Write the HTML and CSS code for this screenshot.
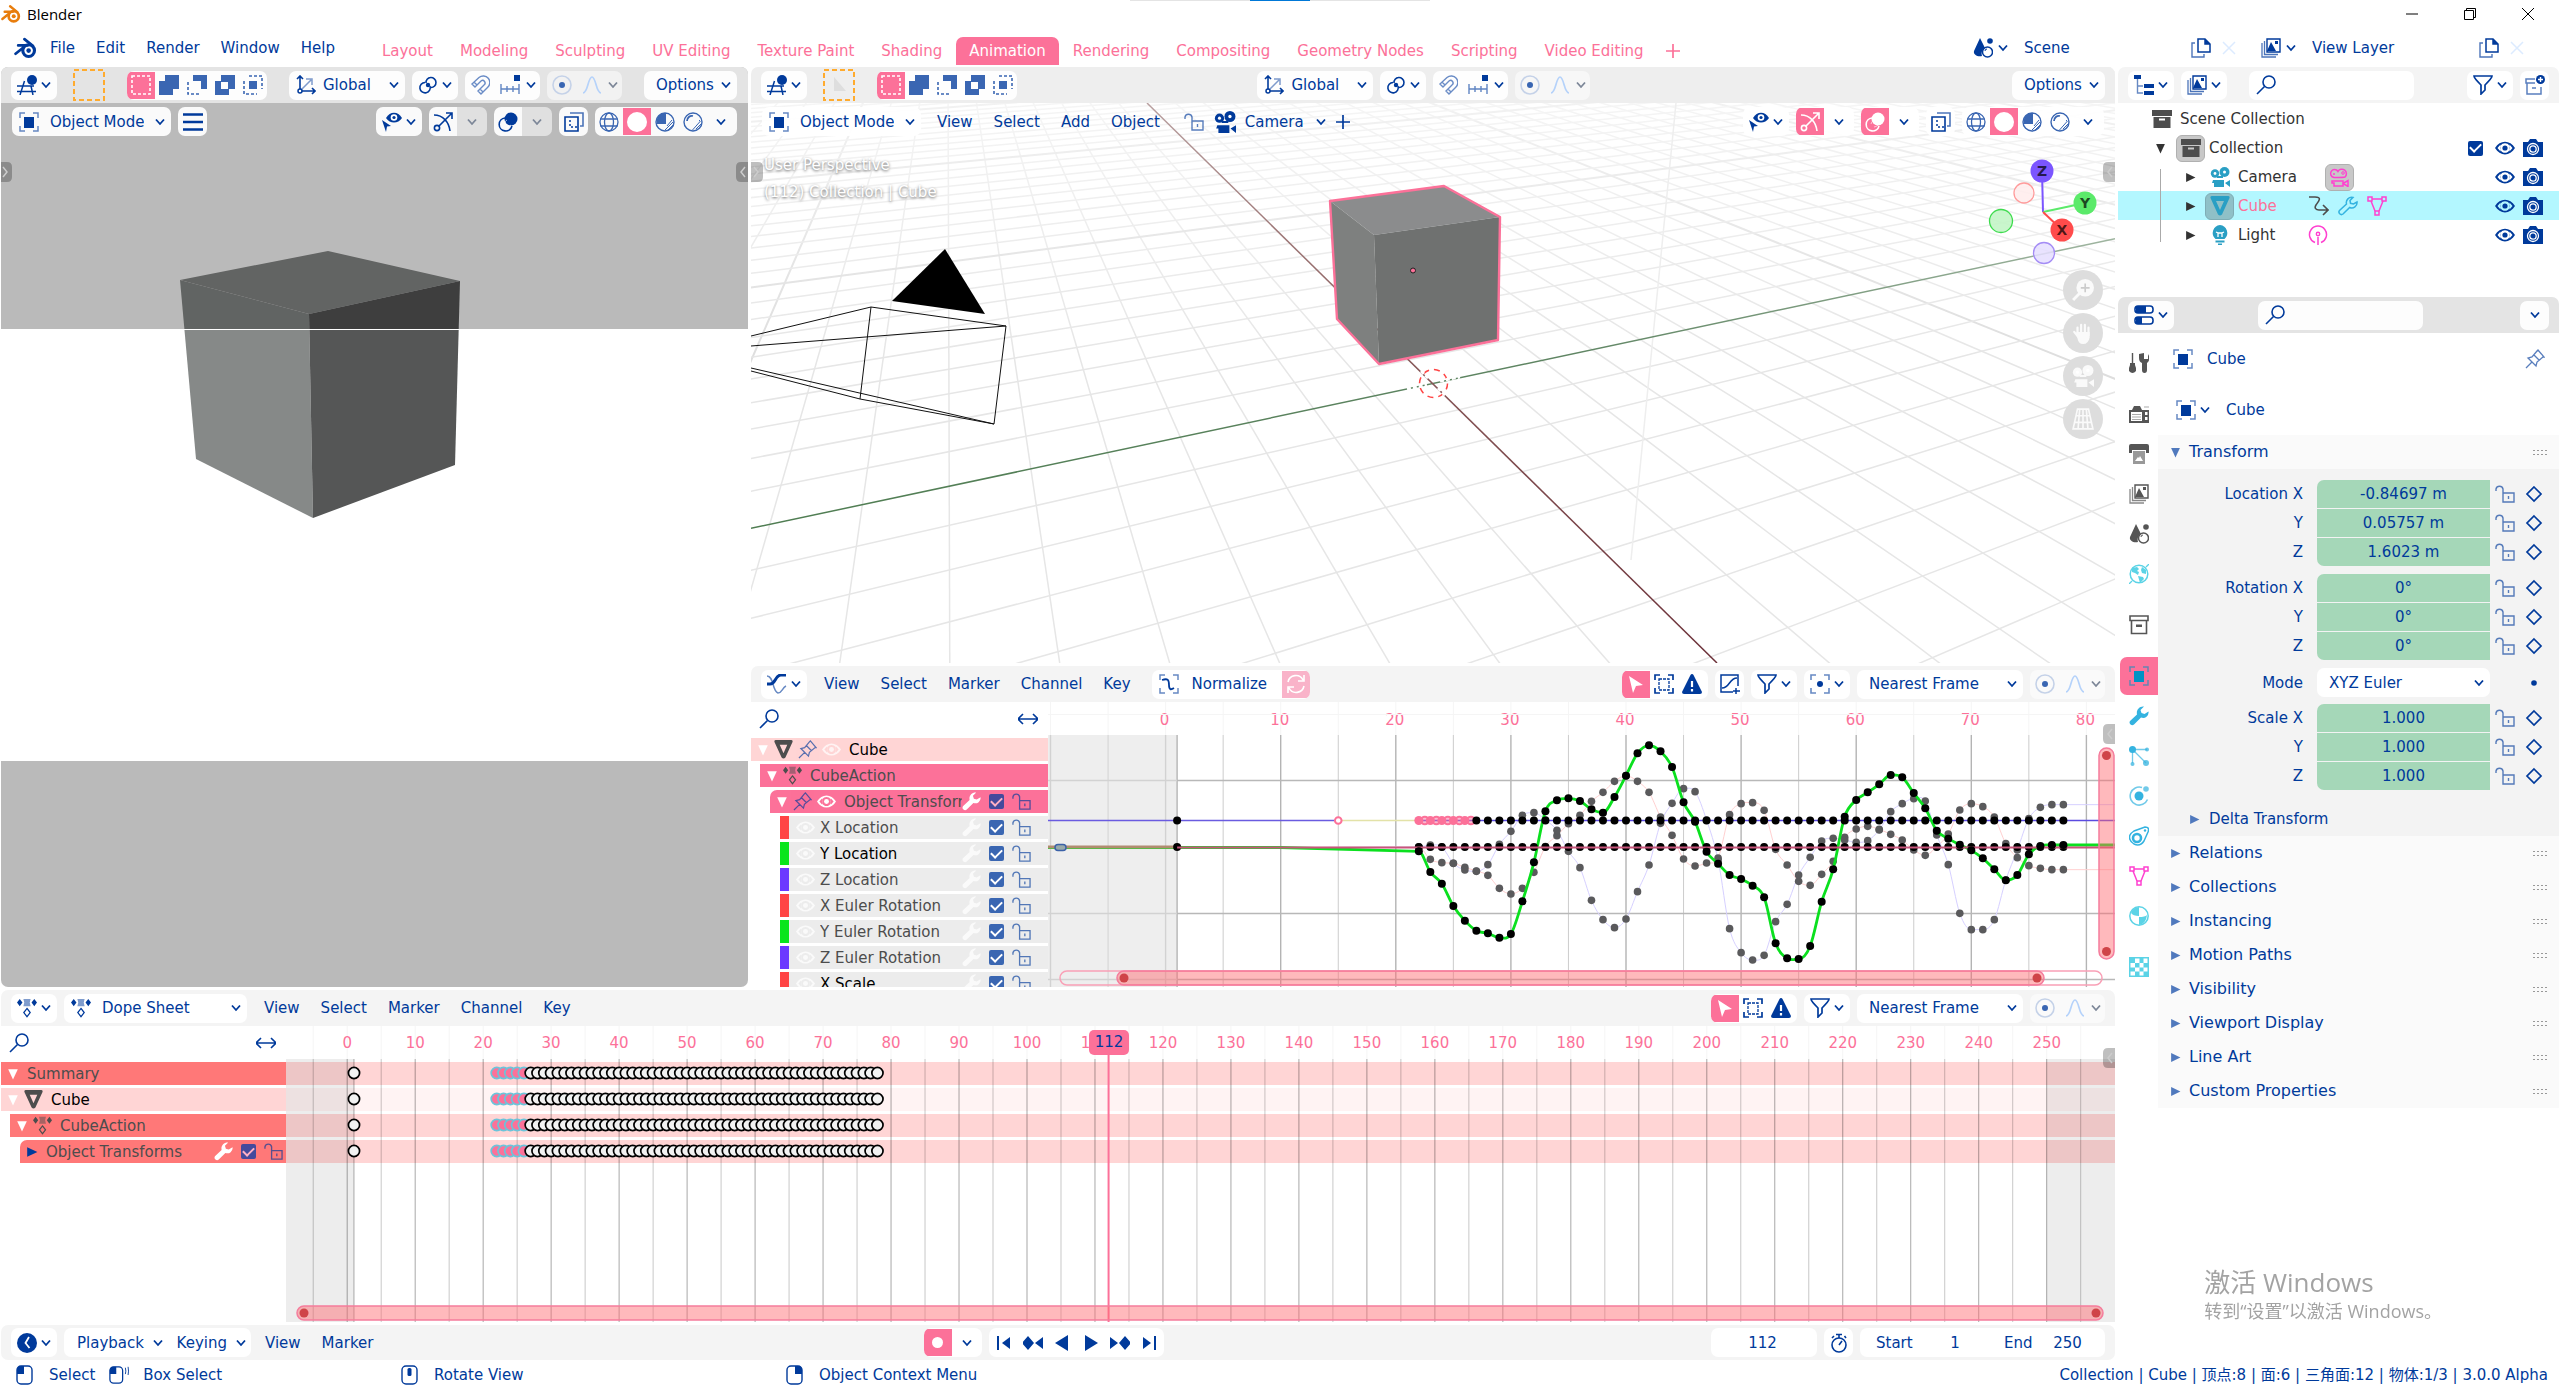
FILE: index.html
```html
<!DOCTYPE html>
<html lang="en">
<head>
<meta charset="utf-8">
<title>Blender</title>
<link rel="stylesheet" href="styles.css">
</head>
<body>
<svg class="defs" aria-hidden="true">
  <defs>
  <symbol id="logo" viewBox="0 0 22 20"><g fill="none" stroke="currentColor" stroke-linecap="round"><circle cx="14" cy="12.500" r="5.600" stroke-width="3"/><path d="M1.500 15.500L9 9.500M4 7.500h9M10 1.500l8 6.500" stroke-width="2.600"/></g><circle cx="14" cy="12.500" r="2.200" fill="currentColor"/></symbol>
  <symbol id="chev" viewBox="0 0 10 8"><path d="M1 1.500l4 4.500 4-4.500" fill="none" stroke="currentColor" stroke-width="1.800"/></symbol>
  <symbol id="view3d" viewBox="0 0 20 20"><path d="M0 11h17M0 16.500h19M7.500 6L3 20M14 11l2 9" fill="none" stroke="currentColor" stroke-width="1.500"/><circle cx="15" cy="5" r="5" fill="currentColor"/></symbol>
  <symbol id="selbox" viewBox="0 0 32 32"><rect x="1" y="1" width="30" height="30" fill="none" stroke="#ffab2e" stroke-width="2" stroke-dasharray="5 3"/></symbol>
  <symbol id="m-set" viewBox="0 0 20 20"><rect x="1" y="1" width="18" height="18" fill="none" stroke="#fff" stroke-width="1.600" stroke-dasharray="3 2"/></symbol>
  <symbol id="m-ext" viewBox="0 0 20 20"><path d="M6 0h14v14h-6v6H0V6h6z" fill="currentColor"/></symbol>
  <symbol id="m-sub" viewBox="0 0 20 20"><path d="M6 0h14v14h-6V6H6z" fill="currentColor"/><path d="M1 7v12h12" fill="none" stroke="currentColor" stroke-width="1.600" stroke-dasharray="3 2"/></symbol>
  <symbol id="m-inv" viewBox="0 0 20 20"><path fill-rule="evenodd" d="M6 0h14v14h-6v6H0V6h6zM6 7v7h7V7z" fill="currentColor"/></symbol>
  <symbol id="m-int" viewBox="0 0 20 20"><path d="M6 6h8v8H6z" fill="currentColor"/><path d="M6 1h13v13M1 6v13h13" fill="none" stroke="currentColor" stroke-width="1.600" stroke-dasharray="3 2"/></symbol>
  <symbol id="axes" viewBox="0 0 20 20"><path d="M4 16V1M1 4l3-3 3 3M4 16h15M16 13l3 3-3 3" fill="none" stroke="currentColor" stroke-width="1.600"/><path d="M5 15L15 5M10 4h6v6" fill="none" stroke="currentColor" stroke-opacity=".5" stroke-width="1.500"/><circle cx="4" cy="16" r="2" fill="#fff" stroke="currentColor" stroke-width="1.500"/></symbol>
  <symbol id="pivot" viewBox="0 0 20 20"><g fill="none" stroke="currentColor" stroke-width="1.600"><path d="M8 8a5 5 0 1 1 5 4.500"/><path d="M12 11a5.200 5.200 0 1 1-5-3.500"/></g><circle cx="10" cy="10" r="2.200" fill="currentColor"/></symbol>
  <symbol id="magnet" viewBox="0 0 20 20"><path d="M2 9l7-6.500a6.500 6.500 0 0 1 8.500 10L11 19l-3-3 6-6a2.500 2.500 0 0 0-3-4L5 12zM4 7l3 3M10 14l3 3" fill="none" stroke="currentColor" stroke-width="1.400"/></symbol>
  <symbol id="incr" viewBox="0 0 20 20"><path d="M1 14h18M1 9v10M7 11v6M13 11v6M19 9v10" fill="none" stroke="currentColor" stroke-width="1.400"/><path d="M14 0h6v6h-6z" fill="#003a9b"/></symbol>
  <symbol id="prop" viewBox="0 0 20 20"><circle cx="10" cy="10" r="9" fill="none" stroke="#c5d2e8" stroke-width="1.600"/><circle cx="10" cy="10" r="3" fill="#3a66b2"/></symbol>
  <symbol id="falloff" viewBox="0 0 20 20"><path d="M1 18c5 0 5-16 9-16s4 16 9 16" fill="none" stroke="#b5d2fa" stroke-width="1.700"/></symbol>
  <symbol id="object" viewBox="0 0 20 20"><path d="M5 5h10v11H5z" fill="currentColor"/><path d="M1 6V1h5M14 1h5v5M19 14v5h-5M6 19H1v-5" fill="none" stroke="currentColor" stroke-opacity=".6" stroke-width="1.500"/></symbol>
  <symbol id="burger" viewBox="0 0 20 20"><path d="M0 2.500h20M0 10h20M0 17.500h20" stroke="currentColor" stroke-width="2.600"/></symbol>
  <symbol id="eyecur" viewBox="0 0 20 20"><path d="M4 6c4-7 12-7 16 0-4 6-12 6-16 0z" fill="currentColor"/><circle cx="12" cy="5.500" r="3.300" fill="#fff"/><circle cx="12" cy="5.500" r="1.600" fill="currentColor"/><path d="M0 8l9 6-4 .500-1 5.500z" fill="currentColor"/></symbol>
  <symbol id="gizmo" viewBox="0 0 20 20"><path d="M1 3c9 0 15 7 16 16M5.500 14.500L19 1M13 1h6v6" fill="none" stroke="currentColor" stroke-width="1.600"/><circle cx="4" cy="16" r="2.600" fill="none" stroke="currentColor" stroke-width="1.600"/></symbol>
  <symbol id="overlay" viewBox="0 0 20 20"><circle cx="13" cy="7" r="6.500" fill="currentColor"/><path d="M7 6a6.500 6.500 0 1 0 7 8" fill="none" stroke="currentColor" stroke-width="1.600"/><path d="M6 12a6 6 0 0 1 3-4M9 15a6 6 0 0 0 4-2" fill="none" stroke="#fff" stroke-opacity=".6"/></symbol>
  <symbol id="xray" viewBox="0 0 20 20"><path d="M1 5h13v14H1z" fill="none" stroke="currentColor" stroke-width="1.600"/><path d="M6 1h13v13h-3" fill="none" stroke="currentColor" stroke-opacity=".7" stroke-width="1.600"/><path d="M6 8v7h7" fill="none" stroke="currentColor" stroke-dasharray="2 2" stroke-width="1.500"/></symbol>
  <symbol id="wire" viewBox="0 0 20 20"><g fill="none" stroke="currentColor" stroke-width="1.300"><circle cx="10" cy="10" r="9"/><ellipse cx="10" cy="10" rx="4.500" ry="9"/><path d="M1.500 7h17M1.500 14h17"/></g></symbol>
  <symbol id="solid" viewBox="0 0 20 20"><circle cx="10" cy="10" r="10" fill="currentColor"/></symbol>
  <symbol id="matcap" viewBox="0 0 20 20"><circle cx="10" cy="10" r="9" fill="none" stroke="currentColor" stroke-width="1.400"/><path d="M11 1v11H2C0 6 5 0 11 1z" fill="currentColor"/><path d="M18 10l-8 8M18 13l-5 5M17 8l-5 6" stroke="currentColor"/></symbol>
  <symbol id="rend" viewBox="0 0 20 20"><circle cx="10" cy="10" r="9" fill="none" stroke="currentColor" stroke-width="1.400"/><path d="M4 9c0-3 3-6 6-5" fill="none" stroke="currentColor" stroke-width="1.800"/><path d="M17.500 9l-8 9M18 12l-5 5M16 8l1 1" stroke="currentColor"/></symbol>
  <symbol id="lock" viewBox="0 0 20 20"><path d="M8 9h11v9H8zM8 9V5a3.600 3.600 0 0 0-7 0v2M13.500 12v3" fill="none" stroke="currentColor" stroke-width="1.400"/></symbol>
  <symbol id="movie" viewBox="0 0 20 20"><circle cx="5" cy="6.500" r="4.200" fill="currentColor"/><circle cx="14.500" cy="5" r="5" fill="currentColor"/><path d="M3 13h11v7H4v-4H2zM15 16l5-3v7zM7 9h6v2H7z" fill="currentColor"/><circle cx="5" cy="6.500" r="1.400" fill="#fff"/><circle cx="14.500" cy="5" r="1.500" fill="#fff"/></symbol>
  <symbol id="movie-o" viewBox="0 0 20 20"><g fill="none" stroke="currentColor" stroke-width="1.500"><path d="M5 10.500a4 4 0 1 1 4-6 4.500 4.500 0 1 1 7 5.500q-1 .500-11 .500z"/><path d="M3 14h11v5H5v-3H3zM14 16.500l5-3v6z"/></g><circle cx="5" cy="7" r="1" fill="currentColor"/><circle cx="14" cy="6" r="1.300" fill="none" stroke="currentColor"/></symbol>
  <symbol id="plus" viewBox="0 0 20 20"><path d="M10 3v14M3 10h14" stroke="currentColor" stroke-width="1.700"/></symbol>
  <symbol id="search" viewBox="0 0 20 20"><circle cx="13" cy="7" r="6" fill="none" stroke="currentColor" stroke-width="1.600"/><path d="M8.500 11.500L1 19" stroke="currentColor" stroke-width="1.600"/></symbol>
  <symbol id="zoomin" viewBox="0 0 20 20"><circle cx="12" cy="8" r="8" fill="currentColor"/><path d="M7 13l-6 6" stroke="currentColor" stroke-width="2.600"/><path d="M12 4v8M8 8h8" stroke="#ccc" stroke-width="1.500"/></symbol>
  <symbol id="harrow" viewBox="0 0 20 20"><path d="M0 10h20M5 5l-5 5 5 5M15 5l5 5-5 5" fill="none" stroke="currentColor" stroke-width="1.600"/></symbol>
  <symbol id="pin" viewBox="0 0 20 20"><path d="M1 19l6-6M3 9l8 8 1-4 6-5 1 0-6-7-1 1-5 6zM9 6l5 5" fill="none" stroke="currentColor" stroke-width="1.300"/></symbol>
  <symbol id="eye" viewBox="0 0 20 20"><path fill-rule="evenodd" d="M0 10C5 1.500 15 1.500 20 10 15 18.500 5 18.500 0 10zM10 5.200a4.800 4.800 0 1 0 .01 0zM2.500 10l3 3.500v-7zM17.500 10l-3 3.500v-7z" fill="currentColor"/><circle cx="10" cy="10" r="2.600" fill="currentColor"/></symbol>
  <symbol id="wrench" viewBox="0 0 20 20"><path d="M19.500 5.500a5.500 5.500 0 0 1-7.500 6L5 18.500a2.700 2.700 0 0 1-4-3.500L8 8.500C7 4 10.500 0 15 .600L11.500 4l1 3 3 1z" fill="currentColor"/></symbol>
  <symbol id="wrench-o" viewBox="0 0 20 20"><path d="M19 6a5.300 5.300 0 0 1-7.300 5.500L5 18a2.500 2.500 0 0 1-3.500-3.500L8.500 8C7.500 4 11 .500 15 1.500l-3 3 .500 2.800 3 .700z" fill="none" stroke="currentColor" stroke-width="1.500"/></symbol>
  <symbol id="graph" viewBox="0 0 20 20"><path d="M0 10h3c6 0 5-9 11-9h5" fill="none" stroke="currentColor" stroke-width="3"/><path d="M0 2c7 0 5 15 11 17 4 0 4-5 8-7" fill="none" stroke="currentColor" stroke-opacity=".6" stroke-width="1.500"/></symbol>
  <symbol id="norm" viewBox="0 0 20 20"><path d="M1 6V1h5M14 1h5v5M19 14v5h-5M6 19H1v-5" fill="none" stroke="currentColor" stroke-opacity=".6" stroke-width="1.500"/><path d="M3 6c6-2 7 0 7 5s2 5 5 3" fill="none" stroke="currentColor" stroke-width="1.800"/></symbol>
  <symbol id="refresh" viewBox="0 0 20 20"><path d="M2 8a8 8 0 0 1 15-2M18 1v6h-6M18 12a8 8 0 0 1-15 2M2 19v-6h6" fill="none" stroke="currentColor" stroke-width="1.600"/></symbol>
  <symbol id="cursor" viewBox="0 0 20 20"><path d="M3 2l14 9-7 1-3 7z" fill="currentColor"/></symbol>
  <symbol id="boxsel" viewBox="0 0 20 20"><path d="M1 6V1h5M14 1h5v5M19 14v5h-5M6 19H1v-5" fill="none" stroke="currentColor" stroke-width="1.700"/><path d="M5 5h10v11H5z" fill="none" stroke="currentColor" stroke-width="1.300" stroke-dasharray="3 1"/></symbol>
  <symbol id="warn" viewBox="0 0 20 20"><path d="M10 0q1 0 1.500 1L20 18q0 2-2 2H2q-2 0-2-2L8.500 1Q9 0 10 0z" fill="currentColor"/><path d="M10 7v6M10 15v2.500" stroke="#fff" stroke-width="2.200"/></symbol>
  <symbol id="ghost" viewBox="0 0 20 20"><path d="M18 12V1H1v17h12M16 14v6M13 17h7" fill="none" stroke="currentColor" stroke-width="1.500"/><path d="M2 14c8 0 7-10 15-10" fill="none" stroke="currentColor" stroke-width="1.500"/></symbol>
  <symbol id="funnel" viewBox="0 0 20 20"><path d="M1 1h18q0 2-7 9v5l-4 4v-9Q1 3 1 1z" fill="none" stroke="currentColor" stroke-width="1.700"/></symbol>
  <symbol id="focus" viewBox="0 0 20 20"><path d="M1 6V1h5M14 1h5v5M19 14v5h-5M6 19H1v-5" fill="none" stroke="currentColor" stroke-opacity=".6" stroke-width="1.600"/><circle cx="10" cy="10" r="3" fill="currentColor"/></symbol>
  <symbol id="dope" viewBox="0 0 22 20"><path d="M3 0l3 4-3 4-3-4zM19 0l3 4-3 4-3-4z" fill="currentColor"/><path d="M7 0h8l-1 4 1 4H7l1-4z" fill="currentColor" opacity=".5"/><path d="M11 10.500l3.500 4.500-3.500 4.500L7.500 15z" fill="none" stroke="currentColor" stroke-width="1.400"/></symbol>
  <symbol id="mesh" viewBox="0 0 20 20"><path fill-rule="evenodd" d="M2 0h16q2 0 1.500 2L12 18.500q-2 2-4 0L.500 2Q0 0 2 0zM6 5l4 9 4-9z" fill="currentColor"/></symbol>
  <symbol id="outl" viewBox="0 0 20 20"><path d="M0 0h7v4H0zM10 9h10v4H10zM10 16h10v4H10z" fill="currentColor"/><path d="M3.500 4v14H9M3.500 11H9" fill="none" stroke="currentColor" stroke-opacity=".6" stroke-width="1.400"/></symbol>
  <symbol id="layers" viewBox="0 0 20 20"><path d="M6 1h13v13H6z" fill="none" stroke="currentColor" stroke-width="1.400"/><path d="M6 13l4-9 5 9zM14 3h3v3h-3z" fill="currentColor"/><path d="M3.500 3v13.500H17M1 5v14h14" fill="none" stroke="currentColor" stroke-opacity=".7" stroke-width="1.300"/></symbol>
  <symbol id="newcol" viewBox="0 0 20 20"><path d="M10 4H1v4h9M2 8v11h14v-7M7 13h4" fill="none" stroke="currentColor" stroke-opacity=".65" stroke-width="1.500"/><circle cx="15.500" cy="4.500" r="4.500" fill="currentColor"/><path d="M15.500 2v5M13 4.500h5" stroke="#fff" stroke-width="1.400"/></symbol>
  <symbol id="box" viewBox="0 0 20 20"><path fill-rule="evenodd" d="M0 1h20v6H0zM1.500 8h17v11h-17zM7 9.500v2h6v-2z" fill="currentColor"/></symbol>
  <symbol id="box-o" viewBox="0 0 20 20"><path d="M1 1h18v4.500H1zM2.500 5.500v13h15v-13" fill="none" stroke="currentColor" stroke-width="1.600"/><path d="M7 9.500h6v2.500H7z" fill="currentColor"/></symbol>
  <symbol id="anim" viewBox="0 0 20 20"><path d="M0 1h6c8 0 3 5 1 8s0 5 3 5h9M14 9l5 5-5 5" fill="none" stroke="currentColor" stroke-width="1.600"/></symbol>
  <symbol id="mdata" viewBox="0 0 20 20"><path d="M5 3h10M4 5l4 10M16 5l-4 10" fill="none" stroke="currentColor" stroke-width="1.500"/><path d="M1 1h4v4H1zM15 1h4v4h-4zM8 15h4v4H8z" fill="none" stroke="currentColor" stroke-width="1.500"/></symbol>
  <symbol id="bulb" viewBox="0 0 20 20"><path d="M10 0a8 8 0 0 1 4.500 14h-9A8 8 0 0 1 10 0zM5.500 15.500h9v2h-9zM8 18.500h4V20H8z" fill="currentColor"/><path d="M6 7l2 1v4M14 7l-2 1v4M8 8h4" fill="none" stroke="#fff" stroke-width="1.300"/></symbol>
  <symbol id="ldata" viewBox="0 0 20 20"><path d="M7 17.500a8.500 8.500 0 1 1 6 0M10 12v8" fill="none" stroke="currentColor" stroke-width="1.500"/><circle cx="10" cy="9" r="1.700" fill="none" stroke="currentColor" stroke-width="1.400"/></symbol>
  <symbol id="photo" viewBox="0 0 20 20"><path d="M0 4h5l2-3h6l2 3h5v15H0z" fill="currentColor"/><circle cx="10" cy="11" r="5.500" fill="none" stroke="#fff" stroke-width="1.300"/><circle cx="10" cy="11" r="3.200" fill="none" stroke="#fff" stroke-width="1.300"/></symbol>
  <symbol id="props" viewBox="0 0 20 20"><rect x="1" y="1" width="18" height="7" rx="3" fill="#fff" stroke="currentColor" stroke-width="1.600"/><rect x="1" y="12" width="18" height="7" rx="3" fill="#fff" stroke="currentColor" stroke-width="1.600"/><path d="M2 1h10v7H2zM2 12h6v7H2z" fill="currentColor"/></symbol>
  <symbol id="t-tool" viewBox="0 0 20 20"><path d="M3.500 0v10" stroke="currentColor" stroke-width="1.400"/><path d="M1 10h5v2l1 3v3q-3.500 4-7 0v-3l1-3zM10 1v4q0 4 3 5v7q0 3 2.500 3T18 17v-7q3-2 2-7l-1-2v5h-4V0z" fill="currentColor"/></symbol>
  <symbol id="t-rend" viewBox="0 0 20 20"><path fill-rule="evenodd" d="M0 6h3l2-4h6l2 4h7v13H0zM2 8v9h11V8zM16 8v3h2.500V8zM16 13v3h2.500v-3z" fill="currentColor"/><path d="M3 10.500h9M3 13h9M3 15.500h9M15 3h5" stroke="currentColor" stroke-opacity=".5"/></symbol>
  <symbol id="t-out" viewBox="0 0 20 20"><path d="M2 0h16q2 0 2 2v7h-3V6H3v3H0V2q0-2 2-2z" fill="currentColor"/><path fill-rule="evenodd" d="M4 7h12v13H4zM6 17h8l-3-5-1 2-1-1z" fill="currentColor" opacity=".6"/></symbol>
  <symbol id="t-scene" viewBox="0 0 20 20"><path d="M7 0l5 10c-3 1-4 5-3 8-4 1-9-1-8-5z" fill="currentColor"/><circle cx="17" cy="3" r="2.800" fill="currentColor"/><circle cx="14.500" cy="14" r="5" fill="none" stroke="currentColor" stroke-width="1.500"/><path d="M12 13q0-2 2-2" fill="none" stroke="currentColor"/></symbol>
  <symbol id="t-world" viewBox="0 0 20 20"><circle cx="10" cy="10" r="8.800" fill="none" stroke="currentColor" stroke-width="1.500"/><path d="M3 4l5-1 2 2-2 2 2 1-1 3-3-2-3-1zM13 3l4 3v4l-4-1-1-3zM9 12l5 1 1 2-4 4z" fill="currentColor"/><path d="M0 20l3-3M17 3l3-3" stroke="currentColor" stroke-width="1.300"/></symbol>
  <symbol id="t-part" viewBox="0 0 20 20"><path d="M3.500 4v13M4 3.500h14M4 4l13 13" stroke="currentColor" stroke-opacity=".7" stroke-width="1.300"/><circle cx="3.500" cy="3.500" r="3.500" fill="currentColor"/><g fill="currentColor" opacity=".75"><circle cx="18" cy="3.500" r="2"/><circle cx="3.500" cy="18" r="2"/><circle cx="17" cy="17" r="3"/></g></symbol>
  <symbol id="t-phys" viewBox="0 0 20 20"><circle cx="10" cy="10" r="4.500" fill="currentColor"/><path d="M13 1.500a9 9 0 1 0 5.500 12" fill="none" stroke="currentColor" stroke-opacity=".7" stroke-width="1.600"/><circle cx="17" cy="3" r="2.800" fill="currentColor" opacity=".7"/></symbol>
  <symbol id="t-cons" viewBox="0 0 20 20"><path d="M16 1q5 0 3 5l-4 9q-4 6-10 3-6-4-4-9 1-2 4-4z" fill="none" stroke="currentColor" stroke-width="1.500"/><circle cx="8" cy="12" r="4" fill="none" stroke="currentColor" stroke-width="2.600"/><circle cx="16" cy="4.500" r="1.200" fill="currentColor"/></symbol>
  <symbol id="t-mat" viewBox="0 0 20 20"><circle cx="10" cy="10" r="9.200" fill="none" stroke="currentColor" stroke-width="1.500"/><path d="M10 1v9q-6 0-8-3 1-5 8-6zM10 11q6 0 8-2-1 9-8 10z" fill="currentColor"/></symbol>
  <symbol id="t-tex" viewBox="0 0 20 20"><path d="M0 0h20v20H0z" fill="currentColor"/><path d="M6 1.500h4.500V6H6zM14.500 1.500h4V6h-4zM1.500 6H6v4.500H1.500zM10.500 6h4v4.500h-4zM6 10.500h4.500v4H6zM14.500 10.500h4v4h-4zM1.500 14.500H6v4H1.500zM10.500 14.500h4v4h-4z" fill="#fff"/></symbol>
  <symbol id="diamond" viewBox="0 0 20 20"><path d="M10 3l7 7-7 7-7-7z" fill="none" stroke="currentColor" stroke-width="1.700"/></symbol>
  <symbol id="dot" viewBox="0 0 20 20"><circle cx="10" cy="10" r="2.800" fill="currentColor"/></symbol>
  <symbol id="down" viewBox="0 0 10 10"><path d="M1 1h8L5 9.500z" fill="currentColor"/></symbol>
  <symbol id="right" viewBox="0 0 10 10"><path d="M1 1v8l8.500-4z" fill="currentColor"/></symbol>
  <symbol id="clock" viewBox="0 0 20 20"><circle cx="10" cy="10" r="10" fill="currentColor"/><path d="M12 4l-3.500 6 4 5" fill="none" stroke="#fff" stroke-width="1.800"/></symbol>
  <symbol id="watch" viewBox="0 0 20 20"><circle cx="10" cy="12" r="7" fill="none" stroke="currentColor" stroke-width="1.600"/><path d="M7 1.500h6M10 2v3M10 12l3-4M3 5l2-2M17 5l-1.500-2" fill="none" stroke="currentColor" stroke-width="1.600"/></symbol>
  <symbol id="p-start" viewBox="0 0 20 20"><path d="M4 3v14" stroke="currentColor" stroke-width="2"/><path d="M16 4v12l-8-6z" fill="currentColor"/></symbol>
  <symbol id="p-prev" viewBox="0 0 20 20"><path d="M5 3l6 7-6 7-6-7zM20 4v12l-8-6z" fill="currentColor"/></symbol>
  <symbol id="p-back" viewBox="0 0 20 20"><path d="M16 2v16L3 10z" fill="currentColor"/></symbol>
  <symbol id="mouse-l" viewBox="0 0 20 20"><rect x="2" y="1" width="15" height="18" rx="4" fill="none" stroke="currentColor" stroke-width="1.400"/><path d="M2 9h7V1H6Q2 1 2 5z" fill="currentColor"/></symbol>
  <symbol id="mouse-d" viewBox="0 0 22 20"><rect x="1" y="1" width="14" height="18" rx="4" fill="none" stroke="currentColor" stroke-width="1.400"/><path d="M1 9h7V1H5Q1 1 1 5z" fill="currentColor"/><path d="M18 2q1 4 0 7M21 1q1 5 0 9" fill="none" stroke="currentColor"/></symbol>
  <symbol id="mouse-m" viewBox="0 0 20 20"><rect x="2" y="1" width="15" height="18" rx="4" fill="none" stroke="currentColor" stroke-width="1.400"/><rect x="7.500" y="3" width="4" height="8" rx="1.500" fill="currentColor"/></symbol>
  <symbol id="mouse-r" viewBox="0 0 20 20"><rect x="2" y="1" width="15" height="18" rx="4" fill="none" stroke="currentColor" stroke-width="1.400"/><path d="M17 9h-7V1h3q4 0 4 4z" fill="currentColor"/></symbol>
  <symbol id="copy" viewBox="0 0 20 20"><path d="M7 1h7l5 5v8H7zM14 1v5h5" fill="none" stroke="currentColor" stroke-width="1.500"/><path d="M14 1l5 5h-5z" fill="currentColor"/><path d="M4 5H1v14h12v-3" fill="none" stroke="currentColor" stroke-opacity=".7" stroke-width="1.400"/></symbol>
  <symbol id="x" viewBox="0 0 20 20"><path d="M4 4l12 12M16 4L4 16" stroke="currentColor" stroke-width="1.500"/></symbol>
  <symbol id="hand" viewBox="0 0 20 20"><path d="M5 13V5M8.300 11V2.500M11.700 11V2.500M15 12V5M6 14l-4-5" fill="none" stroke="currentColor" stroke-width="2" stroke-linecap="round"/><path d="M4 9h12v5q-1 6-6 6-4 0-5-5z" fill="currentColor"/></symbol>
  <symbol id="persp" viewBox="0 0 20 20"><path d="M5 1h10l4 18H1zM10 1v18M3.500 7h13M2.500 13h15M7 1L5.500 19M13 1l1.500 18" fill="none" stroke="currentColor" stroke-width="1.500"/></symbol>
  </defs>
</svg>

<header class="titlebar">
  <svg class="i brand"><use href="#logo"/></svg><span>Blender</span>
  <div class="winbtns">
    <button aria-label="Minimize"><svg width="12" height="12"><path d="M0 6h12" stroke="#000"/></svg></button>
    <button aria-label="Restore"><svg width="12" height="12"><path d="M.5 2.500h9v9h-9zM2.500 2V.500h9v9H10" fill="none" stroke="#000"/></svg></button>
    <button aria-label="Close"><svg width="12" height="12"><path d="M0 0l12 12M12 0L0 12" stroke="#000"/></svg></button>
  </div>
</header>

<nav class="topbar">
  <div class="menus"><button aria-label="Blender menu"><svg class="i logo"><use href="#logo"/></svg></button><button>File</button><button>Edit</button><button>Render</button><button>Window</button><button>Help</button></div>
  <div class="tabs"><button>Layout</button><button>Modeling</button><button>Sculpting</button><button>UV Editing</button><button>Texture Paint</button><button>Shading</button><button class="on">Animation</button><button>Rendering</button><button>Compositing</button><button>Geometry Nodes</button><button>Scripting</button><button>Video Editing</button><button class="addtab" aria-label="Add workspace"><svg class="i"><use href="#plus"/></svg></button></div>
  <div class="ids">
    <div class="id"><button aria-label="Browse scene"><svg class="i"><use href="#t-scene"/></svg><svg class="v"><use href="#chev"/></svg></button><input aria-label="Scene" value="Scene"><svg class="i"><use href="#copy"/></svg><svg class="i off"><use href="#x"/></svg></div>
    <div class="id"><button aria-label="Browse view layer"><svg class="i"><use href="#layers"/></svg><svg class="v"><use href="#chev"/></svg></button><input aria-label="View layer" value="View Layer"><svg class="i"><use href="#copy"/></svg><svg class="i off"><use href="#x"/></svg></div>
  </div>
</nav>

<main class="workspace">
  <div class="editors">
    <div class="upper">
      <section class="view3d camview">
        <svg class="scene" id="camScene" viewBox="1 67 747 920" preserveAspectRatio="xMidYMid slice"></svg>
        <div class="hdr shade">
          <button class="pill type" aria-label="Editor type"><svg class="i"><use href="#view3d"/></svg><svg class="v"><use href="#chev"/></svg></button>
          <button class="tool" aria-label="Select box"><svg><use href="#selbox"/></svg></button>
          <div class="pill modes"><button class="c on"><svg class="i"><use href="#m-set"/></svg></button><button class="c"><svg class="i"><use href="#m-ext"/></svg></button><button class="c"><svg class="i"><use href="#m-sub"/></svg></button><button class="c"><svg class="i"><use href="#m-inv"/></svg></button><button class="c"><svg class="i"><use href="#m-int"/></svg></button></div>
          <span class="s2"></span>
          <label class="pill drop orient"><svg class="i"><use href="#axes"/></svg><select aria-label="Orientation"><option>Global</option></select><svg class="v"><use href="#chev"/></svg></label>
          <button class="pill type" aria-label="Pivot"><svg class="i"><use href="#pivot"/></svg><svg class="v"><use href="#chev"/></svg></button>
          <div class="pill duo mid"><button class="c"><svg class="i"><use href="#magnet"/></svg></button><button class="c"><svg class="i"><use href="#incr"/></svg></button><svg class="v"><use href="#chev"/></svg></div>
          <div class="pill duo dim"><button class="c"><svg class="i"><use href="#prop"/></svg></button><button class="c"><svg class="i"><use href="#falloff"/></svg></button><svg class="v"><use href="#chev"/></svg></div>
          <span class="s2"></span>
          <button class="pill opts">Options<svg class="v"><use href="#chev"/></svg></button>
        </div>
        <div class="hdr row2">
          <label class="pill drop mode"><svg class="i"><use href="#object"/></svg><select aria-label="Mode"><option>Object Mode</option></select><svg class="v"><use href="#chev"/></svg></label>
          <button class="pill one" aria-label="Menu"><svg class="i"><use href="#burger"/></svg></button>
          <span class="grow"></span>
          <button class="pill type" aria-label="Visibility"><svg class="i"><use href="#eyecur"/></svg><svg class="v"><use href="#chev"/></svg></button>
          <div class="pill pair"><button class="c"><svg class="i"><use href="#gizmo"/></svg></button><button class="c fade"><svg class="v"><use href="#chev"/></svg></button></div>
          <div class="pill pair"><button class="c"><svg class="i"><use href="#overlay"/></svg></button><button class="c fade"><svg class="v"><use href="#chev"/></svg></button></div>
          <button class="pill one" aria-label="X-ray"><svg class="i"><use href="#xray"/></svg></button>
          <div class="pill modes shading"><button class="c"><svg class="i"><use href="#wire"/></svg></button><button class="c on"><svg class="i"><use href="#solid"/></svg></button><button class="c"><svg class="i"><use href="#matcap"/></svg></button><button class="c"><svg class="i"><use href="#rend"/></svg></button><button class="c dark"><svg class="v"><use href="#chev"/></svg></button></div>
        </div>
      </section>

      <div class="stack">
        <section class="view3d">
          <svg class="scene" id="userScene" viewBox="751 67 1364 596" preserveAspectRatio="xMidYMid slice"></svg>
          <div class="hdr tint">
            <button class="pill type" aria-label="Editor type"><svg class="i"><use href="#view3d"/></svg><svg class="v"><use href="#chev"/></svg></button>
            <button class="tool" aria-label="Select box"><svg><use href="#selbox"/><path d="M11 8l12 14H11z" fill="#dedede"/></svg></button>
            <div class="pill modes"><button class="c on"><svg class="i"><use href="#m-set"/></svg></button><button class="c"><svg class="i"><use href="#m-ext"/></svg></button><button class="c"><svg class="i"><use href="#m-sub"/></svg></button><button class="c"><svg class="i"><use href="#m-inv"/></svg></button><button class="c"><svg class="i"><use href="#m-int"/></svg></button></div>
            <span class="g5"></span>
            <label class="pill drop orient"><svg class="i"><use href="#axes"/></svg><select aria-label="Orientation"><option>Global</option></select><svg class="v"><use href="#chev"/></svg></label>
            <button class="pill type" aria-label="Pivot"><svg class="i"><use href="#pivot"/></svg><svg class="v"><use href="#chev"/></svg></button>
            <div class="pill duo mid"><button class="c"><svg class="i"><use href="#magnet"/></svg></button><button class="c"><svg class="i"><use href="#incr"/></svg></button><svg class="v"><use href="#chev"/></svg></div>
            <div class="pill duo dim"><button class="c"><svg class="i"><use href="#prop"/></svg></button><button class="c"><svg class="i"><use href="#falloff"/></svg></button><svg class="v"><use href="#chev"/></svg></div>
            <span class="g9"></span>
            <button class="pill opts">Options<svg class="v"><use href="#chev"/></svg></button>
          </div>
          <div class="hdr row2">
            <label class="pill drop mode"><svg class="i"><use href="#object"/></svg><select aria-label="Mode"><option>Object Mode</option></select><svg class="v"><use href="#chev"/></svg></label>
            <div class="menus white"><button>View</button><button>Select</button><button>Add</button><button>Object</button></div>
            <svg class="i soft"><use href="#lock"/></svg>
            <label class="drop cam"><svg class="i big"><use href="#movie"/></svg><select aria-label="Camera"><option>Camera</option></select><svg class="v"><use href="#chev"/></svg></label>
            <button aria-label="Add"><svg class="i"><use href="#plus"/></svg></button>
            <span class="grow"></span>
            <button class="pill type" aria-label="Visibility"><svg class="i"><use href="#eyecur"/></svg><svg class="v"><use href="#chev"/></svg></button>
            <div class="pill pair"><button class="c on"><svg class="i"><use href="#gizmo"/></svg></button><button class="c dark"><svg class="v"><use href="#chev"/></svg></button></div>
            <div class="pill pair"><button class="c on"><svg class="i"><use href="#overlay"/></svg></button><button class="c dark"><svg class="v"><use href="#chev"/></svg></button></div>
            <button class="pill one" aria-label="X-ray"><svg class="i"><use href="#xray"/></svg></button>
            <div class="pill modes shading"><button class="c"><svg class="i"><use href="#wire"/></svg></button><button class="c on"><svg class="i"><use href="#solid"/></svg></button><button class="c"><svg class="i"><use href="#matcap"/></svg></button><button class="c"><svg class="i"><use href="#rend"/></svg></button><button class="c dark"><svg class="v"><use href="#chev"/></svg></button></div>
          </div>
          <p class="info">User Perspective<br>(112) Collection | Cube</p>
          <div class="nav3d"><button aria-label="Zoom"><svg><use href="#zoomin"/></svg></button><button aria-label="Pan"><svg><use href="#hand"/></svg></button><button aria-label="Camera view"><svg><use href="#movie"/></svg></button><button aria-label="Perspective"><svg><use href="#persp"/></svg></button></div>
        </section>

        <section class="graph">
          <div class="hdr light">
            <button class="pill type" aria-label="Editor type"><svg class="i"><use href="#graph"/></svg><svg class="v"><use href="#chev"/></svg></button>
            <div class="menus"><button>View</button><button>Select</button><button>Marker</button><button>Channel</button><button>Key</button></div>
            <div class="pill normalize"><button><svg class="i"><use href="#norm"/></svg>Normalize</button><button class="c on pale"><svg class="i"><use href="#refresh"/></svg></button></div>
            <span class="grow"></span>
            <div class="pill trio"><button class="c on"><svg class="i"><use href="#cursor"/></svg></button><button class="c dark"><svg class="i"><use href="#boxsel"/></svg></button><button class="c dark"><svg class="i"><use href="#warn"/></svg></button></div>
            <button class="pill one" aria-label="Ghost curves"><svg class="i"><use href="#ghost"/></svg></button>
            <button class="pill type" aria-label="Filter"><svg class="i"><use href="#funnel"/></svg><svg class="v"><use href="#chev"/></svg></button>
            <button class="pill type" aria-label="Pivot"><svg class="i"><use href="#focus"/></svg><svg class="v"><use href="#chev"/></svg></button>
            <label class="pill drop snap"><select aria-label="Snap"><option>Nearest Frame</option></select><svg class="v"><use href="#chev"/></svg></label>
            <div class="pill duo dim"><button class="c"><svg class="i"><use href="#prop"/></svg></button><button class="c"><svg class="i"><use href="#falloff"/></svg></button><svg class="v"><use href="#chev"/></svg></div>
          </div>
          <div class="body">
            <div class="channels wide" id="graphChannels">
              <div class="find"><svg class="i"><use href="#search"/></svg><svg class="i"><use href="#harrow"/></svg></div>
              <div class="row cube"><svg class="t"><use href="#down"/></svg><svg class="i ink"><use href="#mesh"/></svg><svg class="i soft"><use href="#pin"/></svg><svg class="i pale"><use href="#eye"/></svg><span class="strong">Cube</span></div>
              <div class="row act in1"><svg class="t"><use href="#down"/></svg><svg class="i ink"><use href="#dope"/></svg><span>CubeAction</span></div>
              <div class="row act in2"><svg class="t"><use href="#down"/></svg><svg class="i soft"><use href="#pin"/></svg><svg class="i pale"><use href="#eye"/></svg><span>Object Transforms</span><svg class="i pale"><use href="#wrench"/></svg><input type="checkbox" checked aria-label="Object Transforms enabled"><svg class="i soft"><use href="#lock"/></svg></div>
            </div>
            <svg class="plot" id="graphPlot" viewBox="1048 702 1067 285" preserveAspectRatio="none"></svg>
          </div>
        </section>
      </div>
    </div>

    <section class="dope">
      <div class="hdr light">
        <button class="pill type" aria-label="Editor type"><svg class="i"><use href="#dope"/></svg><svg class="v"><use href="#chev"/></svg></button>
        <label class="pill drop sheet"><svg class="i"><use href="#dope"/></svg><select aria-label="Editing context"><option>Dope Sheet</option></select><svg class="v"><use href="#chev"/></svg></label>
        <div class="menus"><button>View</button><button>Select</button><button>Marker</button><button>Channel</button><button>Key</button></div>
        <span class="grow"></span>
        <div class="pill trio"><button class="c on"><svg class="i"><use href="#cursor"/></svg></button><button class="c dark"><svg class="i"><use href="#boxsel"/></svg></button><button class="c dark"><svg class="i"><use href="#warn"/></svg></button></div>
        <button class="pill type" aria-label="Filter"><svg class="i"><use href="#funnel"/></svg><svg class="v"><use href="#chev"/></svg></button>
        <label class="pill drop snap"><select aria-label="Snap"><option>Nearest Frame</option></select><svg class="v"><use href="#chev"/></svg></label>
        <div class="pill duo dim"><button class="c"><svg class="i"><use href="#prop"/></svg></button><button class="c"><svg class="i"><use href="#falloff"/></svg></button><svg class="v"><use href="#chev"/></svg></div>
      </div>
      <div class="body">
        <div class="channels narrow">
          <div class="find"><svg class="i"><use href="#search"/></svg><svg class="i"><use href="#harrow"/></svg></div>
          <div class="row red"><svg class="t"><use href="#down"/></svg><span>Summary</span></div>
          <div class="row cube"><svg class="t"><use href="#down"/></svg><svg class="i ink"><use href="#mesh"/></svg><span class="strong">Cube</span></div>
          <div class="row red in1"><svg class="t"><use href="#down"/></svg><svg class="i ink"><use href="#dope"/></svg><span>CubeAction</span></div>
          <div class="row red in2"><svg class="t blue"><use href="#right"/></svg><span>Object Transforms</span><svg class="i pale"><use href="#wrench"/></svg><input type="checkbox" checked aria-label="Object Transforms enabled"><svg class="i soft"><use href="#lock"/></svg></div>
        </div>
        <svg class="plot" id="dopePlot" viewBox="286 1026 1829 296" preserveAspectRatio="none"></svg>
      </div>
    </section>

    <section class="timeline hdr light">
      <button class="pill type" aria-label="Editor type"><svg class="i"><use href="#clock"/></svg><svg class="v"><use href="#chev"/></svg></button>
      <div class="pill play"><button>Playback<svg class="v"><use href="#chev"/></svg></button><button>Keying<svg class="v"><use href="#chev"/></svg></button></div>
      <div class="menus"><button>View</button><button>Marker</button></div>
      <span class="grow"></span>
      <div class="pill pair"><button class="c on" aria-label="Auto keying"><svg class="i rec"><use href="#solid"/></svg></button><button class="c dark"><svg class="v"><use href="#chev"/></svg></button></div>
      <div class="pill transport"><button class="c" aria-label="Jump to start"><svg class="i"><use href="#p-start"/></svg></button><button class="c" aria-label="Previous keyframe"><svg class="i"><use href="#p-prev"/></svg></button><button class="c" aria-label="Play reversed"><svg class="i"><use href="#p-back"/></svg></button><button class="c" aria-label="Play"><svg class="i flip"><use href="#p-back"/></svg></button><button class="c" aria-label="Next keyframe"><svg class="i flip"><use href="#p-prev"/></svg></button><button class="c" aria-label="Jump to end"><svg class="i flip"><use href="#p-start"/></svg></button></div>
      <span class="grow"></span>
      <input class="pill frame" aria-label="Current frame" value="112">
      <button class="pill one" aria-label="Use preview range"><svg class="i"><use href="#watch"/></svg></button>
      <div class="pill range"><label for="fs">Start</label><input id="fs" value="1"><label for="fe">End</label><input id="fe" value="250"></div>
    </section>
  </div>

  <aside class="side">
    <section class="outliner">
      <div class="hdr light">
        <button class="pill type" aria-label="Editor type"><svg class="i"><use href="#outl"/></svg><svg class="v"><use href="#chev"/></svg></button>
        <button class="pill type" aria-label="Display mode"><svg class="i"><use href="#layers"/></svg><svg class="v"><use href="#chev"/></svg></button>
        <label class="pill searchbox first"><svg class="i"><use href="#search"/></svg><input type="search" aria-label="Filter"></label>
        <span class="grow"></span>
        <button class="pill type" aria-label="Filter options"><svg class="i"><use href="#funnel"/></svg><svg class="v"><use href="#chev"/></svg></button>
        <button class="pill one" aria-label="New collection"><svg class="i"><use href="#newcol"/></svg></button>
      </div>
      <ul class="tree">
        <li class="lv0"><span class="ic ink"><svg class="i"><use href="#box"/></svg></span>Scene Collection</li>
        <li class="lv1"><svg class="t"><use href="#down"/></svg><span class="ic ink hl"><svg class="i"><use href="#box"/></svg></span>Collection<span class="grow"></span><input type="checkbox" checked aria-label="Exclude from view layer"><svg class="i"><use href="#eye"/></svg><svg class="i"><use href="#photo"/></svg></li>
        <li class="lv2"><svg class="t"><use href="#right"/></svg><span class="ic teal"><svg class="i"><use href="#movie"/></svg></span>Camera<span class="data"><span class="ic hl mag"><svg class="i"><use href="#movie-o"/></svg></span></span><span class="grow"></span><svg class="i"><use href="#eye"/></svg><svg class="i"><use href="#photo"/></svg></li>
        <li class="lv2 sel"><svg class="t"><use href="#right"/></svg><span class="ic teal hl"><svg class="i"><use href="#mesh"/></svg></span><b>Cube</b><span class="data"><span class="ic ink"><svg class="i"><use href="#anim"/></svg></span><span class="ic sky"><svg class="i"><use href="#wrench-o"/></svg></span><span class="ic mag"><svg class="i"><use href="#mdata"/></svg></span></span><span class="grow"></span><svg class="i"><use href="#eye"/></svg><svg class="i"><use href="#photo"/></svg></li>
        <li class="lv2"><svg class="t"><use href="#right"/></svg><span class="ic teal"><svg class="i"><use href="#bulb"/></svg></span>Light<span class="data"><span class="ic mag"><svg class="i"><use href="#ldata"/></svg></span></span><span class="grow"></span><svg class="i"><use href="#eye"/></svg><svg class="i"><use href="#photo"/></svg></li>
      </ul>
    </section>

    <section class="properties">
      <div class="hdr gray">
        <button class="pill type" aria-label="Editor type"><svg class="i"><use href="#props"/></svg><svg class="v"><use href="#chev"/></svg></button>
        <span class="g5"></span>
        <label class="pill searchbox"><svg class="i"><use href="#search"/></svg><input type="search" aria-label="Search properties"></label>
        <span class="g6"></span>
        <button class="pill one" aria-label="Options"><svg class="v"><use href="#chev"/></svg></button>
      </div>
      <div class="pbody">
        <nav class="ptabs">
          <button aria-label="Tool"><svg class="i"><use href="#t-tool"/></svg></button>
          <button class="gap" aria-label="Render"><svg class="i"><use href="#t-rend"/></svg></button>
          <button aria-label="Output"><svg class="i"><use href="#t-out"/></svg></button>
          <button aria-label="View layer"><svg class="i"><use href="#layers"/></svg></button>
          <button aria-label="Scene"><svg class="i"><use href="#t-scene"/></svg></button>
          <button class="cy" aria-label="World"><svg class="i"><use href="#t-world"/></svg></button>
          <button class="gap" aria-label="Collection"><svg class="i"><use href="#box-o"/></svg></button>
          <button class="gap on" aria-label="Object"><svg class="i"><use href="#object"/></svg></button>
          <button class="sky" aria-label="Modifiers"><svg class="i"><use href="#wrench"/></svg></button>
          <button class="sky" aria-label="Particles"><svg class="i"><use href="#t-part"/></svg></button>
          <button class="sky" aria-label="Physics"><svg class="i"><use href="#t-phys"/></svg></button>
          <button class="sky" aria-label="Constraints"><svg class="i"><use href="#t-cons"/></svg></button>
          <button class="mag" aria-label="Data"><svg class="i"><use href="#mdata"/></svg></button>
          <button class="cy" aria-label="Material"><svg class="i"><use href="#t-mat"/></svg></button>
          <button class="gap cy" aria-label="Texture"><svg class="i"><use href="#t-tex"/></svg></button>
        </nav>
        <div class="pmain">
          <div class="crumb"><svg class="i"><use href="#object"/></svg><span>Cube</span><span class="grow"></span><svg class="i soft"><use href="#pin"/></svg></div>
          <div class="crumb name"><svg class="i"><use href="#object"/></svg><svg class="v"><use href="#chev"/></svg><span>Cube</span></div>
          <h2 class="panel"><svg class="t"><use href="#down"/></svg>Transform<i class="grip"></i></h2>
          <div class="fields">
            <div class="set">
              <div class="prow"><label for="lx">Location X</label><input id="lx" value="-0.84697 m"><svg class="i soft"><use href="#lock"/></svg><svg class="i"><use href="#diamond"/></svg></div>
              <div class="prow"><label for="ly">Y</label><input id="ly" value="0.05757 m"><svg class="i soft"><use href="#lock"/></svg><svg class="i"><use href="#diamond"/></svg></div>
              <div class="prow"><label for="lz">Z</label><input id="lz" value="1.6023 m"><svg class="i soft"><use href="#lock"/></svg><svg class="i"><use href="#diamond"/></svg></div>
            </div>
            <div class="set">
              <div class="prow"><label for="rx">Rotation X</label><input id="rx" value="0°"><svg class="i soft"><use href="#lock"/></svg><svg class="i"><use href="#diamond"/></svg></div>
              <div class="prow"><label for="ry">Y</label><input id="ry" value="0°"><svg class="i soft"><use href="#lock"/></svg><svg class="i"><use href="#diamond"/></svg></div>
              <div class="prow"><label for="rz">Z</label><input id="rz" value="0°"><svg class="i soft"><use href="#lock"/></svg><svg class="i"><use href="#diamond"/></svg></div>
            </div>
            <div class="prow"><label for="rm">Mode</label><div class="pill drop"><select id="rm"><option>XYZ Euler</option></select><svg class="v"><use href="#chev"/></svg></div><span></span><svg class="i"><use href="#dot"/></svg></div>
            <div class="set">
              <div class="prow"><label for="sx">Scale X</label><input id="sx" value="1.000"><svg class="i soft"><use href="#lock"/></svg><svg class="i"><use href="#diamond"/></svg></div>
              <div class="prow"><label for="sy">Y</label><input id="sy" value="1.000"><svg class="i soft"><use href="#lock"/></svg><svg class="i"><use href="#diamond"/></svg></div>
              <div class="prow"><label for="sz">Z</label><input id="sz" value="1.000"><svg class="i soft"><use href="#lock"/></svg><svg class="i"><use href="#diamond"/></svg></div>
            </div>
            <h3 class="sub"><svg class="t"><use href="#right"/></svg>Delta Transform</h3>
          </div>
          <h2 class="panel"><svg class="t"><use href="#right"/></svg>Relations<i class="grip"></i></h2>
          <h2 class="panel"><svg class="t"><use href="#right"/></svg>Collections<i class="grip"></i></h2>
          <h2 class="panel"><svg class="t"><use href="#right"/></svg>Instancing<i class="grip"></i></h2>
          <h2 class="panel"><svg class="t"><use href="#right"/></svg>Motion Paths<i class="grip"></i></h2>
          <h2 class="panel"><svg class="t"><use href="#right"/></svg>Visibility<i class="grip"></i></h2>
          <h2 class="panel"><svg class="t"><use href="#right"/></svg>Viewport Display<i class="grip"></i></h2>
          <h2 class="panel"><svg class="t"><use href="#right"/></svg>Line Art<i class="grip"></i></h2>
          <h2 class="panel"><svg class="t"><use href="#right"/></svg>Custom Properties<i class="grip"></i></h2>
        </div>
      </div>
    </section>
  </aside>
</main>

<footer class="status">
  <div><svg class="i"><use href="#mouse-l"/></svg><span>Select</span><svg class="i"><use href="#mouse-d"/></svg><span>Box Select</span></div>
  <div><svg class="i"><use href="#mouse-m"/></svg><span>Rotate View</span></div>
  <div><svg class="i"><use href="#mouse-r"/></svg><span>Object Context Menu</span></div>
  <p>Collection | Cube | 顶点:8 | 面:6 | 三角面:12 | 物体:1/3 | 3.0.0 Alpha</p>
</footer>
<div class="activate"><strong>激活 Windows</strong><span>转到“设置”以激活 Windows。</span></div>
<i class="capture"></i>
<script src="script.js"></script>
</body>
</html>
```
FILE: styles.css
```css
:root { --blue: #003a9b; --pink: #fc7199; --ink: #4d4d4d; }
* { box-sizing: border-box; }
body { margin: 0; height: 100vh; display: flex; flex-direction: column; overflow: hidden; background: #fff; color: var(--blue); font: 15px/20px "DejaVu Sans", "Noto Sans CJK SC", sans-serif; }
button, input, select { font: inherit; color: inherit; border: 0; background: none; padding: 0; margin: 0; outline: 0; }
select { appearance: none; flex: 1; min-width: 0; }
input { min-width: 0; }
p, h2, h3, ul { margin: 0; padding: 0; font-weight: normal; }
svg { display: block; flex: none; }
.defs { position: absolute; width: 0; height: 0; }
.i { width: 20px; height: 20px; }
.v { width: 10px; height: 8px; }
.t { width: 11px; height: 11px; }
.grow { flex: 1; }
.g5 { flex: 5; }
.g6 { flex: 6; }
.g9 { flex: 9; }
.soft { opacity: .65; }
.off { color: #dcebff; }

.titlebar { height: 30px; flex: none; display: flex; align-items: center; gap: 6px; padding: 0 3px 2px 1px; color: #000; font: 15px/20px "Open Sans", sans-serif; }
.titlebar .brand { color: #e87d0d; }
.winbtns { margin-left: auto; display: flex; }
.winbtns button { width: 58px; height: 28px; display: grid; place-items: center; }
.capture { position: fixed; top: 0; left: 50%; width: 300px; height: 1px; margin-left: -150px; background: linear-gradient(90deg, #e4e4e4 120px, #0078d7 120px 180px, #e4e4e4 180px); }

.topbar { height: 37px; flex: none; display: flex; align-items: center; }
.menus { display: flex; align-items: center; gap: 1px; }
.menus button { padding: 0 10px; white-space: nowrap; }
.topbar .menus { padding-bottom: 2px; }
.topbar .menus button:first-child { padding: 0 2px 0 14px; }
.topbar .logo { width: 23px; height: 22px; }
.tabs { display: flex; gap: 1px; align-self: flex-end; margin: 0 0 2px 24px; color: var(--pink); }
.tabs button { height: 28px; padding: 0 13px; border-radius: 7px 7px 0 0; white-space: nowrap; }
.tabs .on { background: var(--pink); color: #fff; }
.tabs .addtab { padding: 0 5px; }
.ids { display: flex; margin-left: auto; gap: 22px; padding-right: 33px; }
.id { display: flex; align-items: center; gap: 8px; padding-bottom: 2px; }
.id button { display: flex; align-items: center; gap: 5px; }
.id input { width: 167px; padding-left: 8px; }

.workspace { flex: 1; min-height: 0; display: grid; grid-template-columns: minmax(0, 1fr) 441px; gap: 3px; padding: 0 1px; }
.editors { display: grid; grid-template-rows: minmax(0, 920fr) minmax(0, 332fr) 35px; gap: 3px; min-height: 0; }
.upper { display: grid; grid-template-columns: minmax(0, 747fr) minmax(0, 1364fr); gap: 3px; min-height: 0; }
.stack { display: grid; grid-template-rows: minmax(0, 596fr) minmax(0, 321fr); gap: 3px; min-height: 0; }
section { border-radius: 7px; overflow: hidden; min-height: 0; }

.hdr { display: flex; align-items: center; gap: 7px; height: 36px; flex: none; padding: 0 10px; position: relative; white-space: nowrap; }
.shade, .gray { background: #e4e4e4; }
.tint { background: #eee; }
.light { background: #f4f4f4; }
.row2 { height: 37px; padding: 0 11px; }
.pill { height: 29px; border-radius: 7px; background: rgba(255, 255, 255, .93); display: flex; align-items: center; overflow: hidden; flex: none; }
.type { width: 46px; padding: 0 6px; justify-content: space-between; }
.one { width: 29px; justify-content: center; }
.tool { margin: 0 15px 0 9px; }
.tool svg { width: 32px; height: 32px; }
.c { width: 28px; height: 27px; display: grid; place-items: center; flex: none; color: #3a66b2; }
.c.on { background: var(--pink); color: #fff; }
.c.dark, .pair .c { color: var(--blue); }
.pair .c.on { color: #fff; }
.pair .c + .c { width: 30px; }
.pair .c.fade { background: rgba(0, 0, 0, .1); color: #7d8798; height: 29px; }
.c.pale { background: #f9b3c9; }
.trio, .shading { padding-right: 2px; }
.s2 { width: 8px; }
.drop { padding: 0 6px 0 7px; gap: 11px; position: relative; }
.orient { width: 116px; gap: 7px; }
.mode { width: 159px; }
.sheet { width: 183px; }
.snap { width: 166px; padding-left: 12px; }
.duo { width: 75px; padding: 0 4px 0 1px; }
.duo .c + .c { width: 32px; }
.mid .c { color: #6a8cc6; }
.mid .c + .c { color: #5f84c2; }
.dim { background: rgba(255, 255, 255, .5); }
.dim .v { color: #7d8798; }
.opts { width: 93px; padding: 0 6px 0 12px; justify-content: space-between; }

.view3d { position: relative; display: flex; flex-direction: column; background: #fff; }
.scene { position: absolute; inset: 0; width: 100%; height: 100%; }
.scene text { font-weight: bold; text-anchor: middle; }
.menus.white { margin: 0 7px 0 -1px; }
.cam { display: flex; align-items: center; gap: 9px; width: 112px; padding: 0; margin-left: 3px; }
.cam .big { width: 22px; height: 22px; }
.info { position: relative; padding: 12px 13px; line-height: 27px; color: #fff; text-shadow: 0 1px 3px rgba(0, 0, 0, .65); }
.nav3d { position: absolute; right: 12px; top: 203px; display: grid; gap: 3px; }
.nav3d button { width: 40px; height: 40px; border-radius: 50%; background: #ddd; color: #fafafa; display: grid; place-items: center; }
.nav3d svg { width: 22px; height: 22px; }

.graph, .dope { display: flex; flex-direction: column; border-radius: 7px 7px 0 0; }
.normalize { width: 158px; justify-content: space-between; margin-left: 4px; }
.normalize button:first-child { display: flex; gap: 13px; padding-left: 7px; }
.body { flex: 1; min-height: 0; display: flex; }
.plot { flex: 1; min-width: 0; height: 100%; }
.plot text { font-size: 15px; fill: var(--pink); text-anchor: middle; }
.channels { width: 297px; flex: none; overflow: hidden; color: var(--ink); }
.channels.narrow { width: 285px; }
.find { height: 36px; display: flex; justify-content: space-between; align-items: center; padding: 0 10px 2px 8px; color: var(--blue); }
.row { height: 23px; margin-bottom: 3px; display: flex; align-items: center; gap: 5px; padding: 0 3px 0 6px; overflow: hidden; }
.wide .row { padding-right: 17px; }
.row > span { flex: 1; min-width: 0; overflow: hidden; white-space: nowrap; padding-left: 3px; }
.wide .act > span { margin-right: -5px; }
.row .t { color: #fff; width: 12px; height: 12px; }
.row .t.blue { color: var(--blue); }
.row .i { width: 19px; height: 19px; }
.row .soft { color: var(--blue); }
.row .pale { color: #fff; }
.row.curve .pale { color: #fafafa; }
.row.curve > span { padding-left: 0; }
.ink { color: var(--ink); }
.row .strong { color: #000; }
.cube { background: #ffd5d5; }
.cube .pale { color: #fff3f3; }
.act { background: var(--pink); }
.red { background: #ff7878; }
.in1 { margin-left: 9px; }
.in2 { margin-left: 19px; border-radius: 7px 0 0 0; }
.curve { margin-left: 29px; background: #ececec; border-left: 9px solid #ff4444; padding-left: 7px; }
.curve.y { border-color: #09e51c; }
.curve.z { border-color: #6c38ff; }
input[type=checkbox] { appearance: none; width: 15px; height: 15px; border-radius: 2px; background: #3a66b2; flex: none; margin: 0 3px; display: grid; place-items: center; }
input[type=checkbox]:checked::before { content: ""; width: 9px; height: 5px; border: solid #fff; border-width: 0 0 2px 2px; transform: rotate(-45deg); margin-top: -3px; }
.act input[type=checkbox], .red input[type=checkbox] { background: #444a9c; }
.act input[type=checkbox]::before, .red input[type=checkbox]::before { border-color: #ffb0c4; }

.timeline { height: 35px; }
.timeline .menus { margin-left: -3px; }
.play { width: 187px; justify-content: space-between; padding: 0 5px 0 13px; }
.play button { display: flex; align-items: center; gap: 9px; }
.pill .rec { width: 11px; height: 11px; }
.transport { padding: 0 1px; gap: 1px; margin-right: 7px; }
.transport .c { color: var(--blue); }
.flip { transform: scaleX(-1); }
.frame { width: 106px; text-align: center; padding-right: 3px; }
.range { width: 245px; padding-left: 16px; }
.range label { width: 44px; }
.range input { width: 70px; text-align: center; }
.range label + input + label { margin-left: 14px; width: 32px; }
.range input:last-child { flex: 1; padding-right: 6px; }

.side { display: grid; grid-template-rows: 227px minmax(0, 1fr); gap: 3px; min-height: 0; }
.searchbox { width: 165px; padding-left: 7px; }
.searchbox input { flex: 1; }
.searchbox.first { margin-left: 15px; }
.tree { list-style: none; padding-top: 1px; color: #333; position: relative; }
.tree::before { content: ""; position: absolute; left: 42px; top: 66px; width: 1px; height: 73px; background: #aaa; }
.tree li { height: 29px; display: flex; align-items: center; padding: 1px 16px 0 0; }
.tree li > .i { color: var(--blue); margin-left: 8px; }
.tree li > input { background: var(--blue); margin: 0 4px 0 0; }
.ic { width: 29px; height: 27px; border-radius: 6px; display: grid; place-items: center; flex: none; margin-right: 4px; }
.ic.hl { background: #c8c8c8; border: 1px solid #b0b0b0; }
.sel .ic.hl { background: #8fc0c7; border-color: #7fadb5; }
.tree .lv0 { padding-left: 29px; }
.tree .lv1 { padding-left: 37px; }
.tree .lv2 { padding-left: 67px; }
.lv1 .t { margin-right: 10px; }
.lv2 .t { margin-right: 9px; }
.tree .sel { background: #b3f7ff; }
.sel b { font-weight: normal; color: var(--pink); }
.teal { color: #2a9fc4; }
.sky { color: #34b3e0; }
.mag { color: #ff40d0; }
.data { display: flex; margin-left: 28px; }
.data .ic { margin: 0; }

.properties { display: flex; flex-direction: column; }
.pbody { flex: 1; display: flex; min-height: 0; }
.ptabs { width: 40px; padding: 11px 0 0 2px; display: flex; flex-direction: column; gap: 2px; color: #555; }
.ptabs button { height: 38px; display: grid; place-items: center; border-radius: 7px 0 0 7px; }
.ptabs .gap { margin-top: 11px; }
.ptabs .on { background: var(--pink); color: #0093c4; }
.ptabs .sky { color: #34b3e0; }
.ptabs .cy { color: #5bd3e6; }
.ptabs .mag { color: #ff40d0; }
.pmain { flex: 1; }
.crumb { display: flex; align-items: center; gap: 14px; height: 52px; padding: 0 14px 0 15px; }
.crumb.name { height: 50px; gap: 4px; padding-left: 18px; }
.crumb.name span { margin-left: 12px; }
.panel { height: 34px; display: flex; align-items: center; gap: 8px; padding: 0 11px 0 12px; font-size: 16px; background: #fafafa; }
.panel .t, .sub .t { color: #5079bd; }
.grip { margin-left: auto; width: 15px; height: 5px; background: repeating-linear-gradient(90deg, #999 0 2px, transparent 2px 4px) 0 0 / 15px 1px no-repeat, repeating-linear-gradient(90deg, #999 0 2px, transparent 2px 4px) 0 100% / 15px 1px no-repeat; }
.fields { background: #f3f3f3; padding: 11px 11px 7px 0; display: grid; gap: 8px; }
.set { display: grid; gap: 1px; }
.prow { display: grid; grid-template-columns: 145px 1fr 20px 28px; gap: 5px; align-items: center; height: 28px; }
.prow label { text-align: right; }
.prow > svg:last-child { justify-self: center; }
.prow > input { margin-left: 9px; height: 28px; background: #a5d7b8; text-align: center; }
.prow:first-child > input { border-radius: 7px 0 0 0; }
.prow:last-child > input { border-radius: 0 0 0 7px; }
.prow .pill { margin-left: 9px; padding-left: 12px; background: #fff; height: 29px; }
.sub { display: flex; align-items: center; gap: 9px; padding: 11px 0 0 31px; font-size: 15px; }

.status { height: 30px; flex: none; display: grid; grid-template-columns: 15.2% 15.2% 1fr auto; align-items: center; padding: 0 12px 0 15px; }
.status div { display: flex; align-items: center; }
.status span { margin: 0 14px; }
.activate { position: fixed; right: 118px; bottom: 67px; color: #a3a3a3; font-family: "Open Sans", "Noto Sans CJK SC", sans-serif; display: grid; }
.activate strong { font-weight: normal; font-size: 26px; line-height: 34px; }
.activate span { font-size: 18px; line-height: 24px; }
```
FILE: script.js
```js
const NS = 'http://www.w3.org/2000/svg';
function add(parent, name, attrs, text) {
  const e = document.createElementNS(NS, name);
  for (const k in attrs) e.setAttribute(k, attrs[k]);
  if (text !== undefined) e.textContent = text;
  parent.appendChild(e);
  return e;
}
function line(p, x1, y1, x2, y2, stroke, w = 1) {
  return add(p, 'line', { x1, y1, x2, y2, stroke, 'stroke-width': w });
}
function poly(p, points, fill, extra = {}) {
  return add(p, 'polygon', { points, fill, ...extra });
}
// Collapsed region handle at an area edge
function handle(p, x, y, dir) {
  const d = dir < 0 ? `M${x + 12} ${y}h-7q-5 0-5 5v10q0 5 5 5h7z` : `M${x} ${y}h7q5 0 5 5v10q0 5-5 5h-7z`;
  add(p, 'path', { d, fill: '#000', 'fill-opacity': .25 });
  add(p, 'path', { d: dir < 0 ? `M${x + 9} ${y + 5}l-4 5 4 5` : `M${x + 3} ${y + 5}l4 5-4 5`, fill: 'none', stroke: '#ccc', 'stroke-width': 1.5 });
}

// Camera view
const cam = document.getElementById('camScene');
poly(cam, '180,280 328,251 460,281 309,314', '#878988');
poly(cam, '180,280 309,314 313,518 196,459', '#868988');
poly(cam, '309,314 460,281 455,465 313,518', '#555656');
add(cam, 'rect', { x: 1, y: 67, width: 747, height: 262, 'fill-opacity': .27 });
add(cam, 'rect', { x: 1, y: 761, width: 747, height: 226, 'fill-opacity': .27 });
line(cam, 1, 329.5, 748, 329.5, '#fff');
handle(cam, 0, 162, 1);
handle(cam, 736, 162, -1);

// Floor grid: projective map from floor units to the view
const view = document.getElementById('userScene');
const O = [1433.5, 383.3], VX = [947.5, -92], VY = [3672, -92], C = .0521, B = .02541;
function floor(k, m) {
  const w = 1 - k * C + m * B;
  return [0, 1].map(i => (O[i] - k * C * VX[i] + m * B * VY[i]) / w);
}
function gridLine(a, b, major) {
  line(view, a[0].toFixed(1), a[1].toFixed(1), b[0].toFixed(1), b[1].toFixed(1), major ? '#dedede' : '#e6e6e6', major ? 2 : 1.5);
}
for (let m = -35; m <= 60; m++) if (m) gridLine(floor(-60, m), floor((1 + m * B - .08) / C, m), m % 10 === 0);
for (let k = -38; k <= 17; k++) if (k) gridLine(floor(k, (k * C - .92) / B), floor(k, 90), k % 10 === 0);
const defs = add(view, 'defs', {});
function grad(id, x1, y1, x2, y2, stops) {
  const g = add(defs, 'linearGradient', { id, x1, y1, x2, y2, gradientUnits: 'userSpaceOnUse' });
  stops.forEach(([offset, color, o]) => add(g, 'stop', { offset, 'stop-color': color, 'stop-opacity': o }));
}
grad('haze', 0, 103, 0, 360, [[0, '#fff', .6], [1, '#fff', 0]]);
grad('gy', 751, 0, 2115, 0, [[0, '#4f7d52', 1], [.6, '#5f8563', 1], [1, '#9fb5a0', 1]]);
grad('gx', 0, 103, 0, 663, [[0, '#b9a0a0', 1], [.4, '#8a5c5c', 1], [1, '#6b3038', 1]]);
add(view, 'rect', { x: 751, y: 67, width: 1364, height: 300, fill: 'url(#haze)' });
line(view, 1676, 103, 1631, 560, '#eee', 1.5);
line(view, 751, 528.3, 2115, 238.7, 'url(#gy)', 1.5);
line(view, 1147, 103, 1717, 663, 'url(#gx)', 1.5);
// Camera object
add(view, 'path', { d: 'M751 336L871 307L1006 326L994 424L860 399L871 307M751 346L1006 326M751 371L860 399M751 368L994 424', fill: 'none', stroke: '#111' });
poly(view, '945,249 892,301 985,314', '#000');
// Cube
poly(view, '1330,201 1444,186 1500,217 1374,235', '#8b8c8d');
poly(view, '1330,201 1374,235 1379,364 1337,319', '#7e807f');
poly(view, '1374,235 1500,217 1498,340 1379,364', '#6f7170');
poly(view, '1330,201 1444,186 1500,217 1498,340 1379,364 1337,319', 'none', { stroke: '#fc7199', 'stroke-width': 2.4, 'stroke-linejoin': 'round' });
add(view, 'circle', { cx: 1413, cy: 270.5, r: 2.5, fill: '#fc7199', stroke: '#222' });
// 3D cursor
add(view, 'circle', { cx: 1433.5, cy: 383.5, r: 14, fill: 'none', stroke: '#f44', 'stroke-dasharray': '6 5', 'stroke-width': 1.5 });
add(view, 'path', { d: 'M1407 389l20-4M1440 381l20-4M1421 371l8 8M1438 388l8 8', stroke: '#fff', 'stroke-width': 3, 'stroke-dasharray': '4 2' });
// Navigation gizmo
line(view, 2043, 212, 2042, 171, '#7b55ff', 2);
line(view, 2043, 212, 2085, 203, '#5bea6a', 2);
line(view, 2043, 212, 2062, 230, '#ff4b4b', 2);
[[2024, 193, 10, '#ffecec', '#ff9b9b'], [2001, 221, 11.5, '#bff5c3', '#3edc4e'], [2044, 253, 10.5, '#e5deff', '#a48cf5']].forEach(([cx, cy, r, fill, stroke]) =>
  add(view, 'circle', { cx, cy, r, fill, stroke, 'stroke-width': 1.3, 'fill-opacity': .85 }));
[[2042, 171, 'Z', '#7b55ff'], [2085, 203, 'Y', '#5bea6a'], [2062, 230, 'X', '#ff4b4b']].forEach(([cx, cy, t, fill]) => {
  add(view, 'circle', { cx, cy, r: 11.5, fill });
  add(view, 'text', { x: cx, y: cy + 5, 'font-size': 14, 'fill-opacity': .7 }, t);
});
handle(view, 2103, 162, -1);
handle(view, 751, 162, 1);

// Curve channels
const list = document.getElementById('graphChannels');
['X Location', 'Y Location', 'Z Location', 'X Euler Rotation', 'Y Euler Rotation', 'Z Euler Rotation', 'X Scale'].forEach(name => {
  const row = document.createElement('div');
  row.className = 'row curve ' + name[0].toLowerCase();
  const strong = name === 'Y Location' || name === 'X Scale' ? ' class="strong"' : '';
  row.innerHTML = `<svg class="i pale"><use href="#eye"/></svg><span${strong}>${name}</span><svg class="i pale"><use href="#wrench"/></svg><input type="checkbox" checked aria-label="${name} enabled"><svg class="i soft"><use href="#lock"/></svg>`;
  list.appendChild(row);
});

function scrollbar(p, x, y, w, h) {
  const r = Math.min(w, h) / 2;
  add(p, 'rect', { x, y, width: w, height: h, rx: r, fill: '#ff6b70', 'fill-opacity': .47, stroke: '#f57c9c', 'stroke-width': 1.5 });
  const ends = w > h ? [[x + r, y + r], [x + w - r, y + r]] : [[x + r, y + r], [x + r, y + h - r]];
  ends.forEach(([cx, cy]) => add(p, 'circle', { cx, cy, r: 4.5, fill: '#cf4448' }));
}

// Graph editor plot
const g = document.getElementById('graphPlot');
const gx = f => 1165.6 + 11.51 * f;
add(g, 'rect', { x: 1048, y: 735, width: gx(1) - 1048, height: 252, fill: '#eee' });
for (let f = -10; f <= 80; f += 5) {
  line(g, gx(f), 735, gx(f), 987, f < 1 ? '#d2d2d2' : f % 10 ? '#ccc' : '#b4b4b4', f % 10 ? 1 : 1.4);
  line(g, gx(f), 702, gx(f), 735, '#f5f5f5');
  if (f >= 0 && f % 10 === 0) add(g, 'text', { x: gx(f) - 1, y: 725 }, f);
}
line(g, 1048, 714.5, 2115, 714.5, '#f5f5f5');
line(g, gx(1), 735, gx(1), 987, '#aaa', 1.2);
[780.5, 913.5, 979.5].forEach(y => { line(g, 1048, y, gx(1), y, '#d2d2d2', 1.4); line(g, gx(1), y, 2115, y, '#b8b8b8', 1.4); });
const py = v => 660 + v / 3;
const series = {
  green: [574,636,671,738,782,812,820,833,822,724,607,454,421,415,423,448,458,411,347,280,256,274,321,427,485,575,611,645,657,677,712,850,895,897,858,725,628,470,420,397,373,345,352,399,445,512,536,554,571,595,628,661,645,583,558,555,555],
  red: [561,598,608,610,622,633,646,685,702,685,637,560,527,491,466,424,397,364,347,364,397,471,526,597,618,609,594,464,431,428,451,568,615,664,676,643,604,532,507,499,508,523,540,570,586,560,522,450,431,440,471,551,593,617,625,629,629],
  blue: [561,555,561,610,630,634,614,553,514,466,458,480,511,574,623,721,779,803,777,695,615,490,430,386,395,480,600,806,878,900,886,785,733,645,592,543,535,540,547,542,510,455,431,416,423,525,614,760,809,809,779,660,570,476,442,434,434]
};
function curve(vals, stroke, width) {
  const pts = vals.map((v, i) => [gx(22 + i), py(v)]);
  let d = `M1048 847.5H${gx(10)}L${pts[0]}`;
  for (let i = 0; i < pts.length - 1; i++) {
    const t = j => j <= 0 || j >= pts.length - 1 || (pts[j][1] - pts[j - 1][1]) * (pts[j + 1][1] - pts[j][1]) <= 0 ? 0 : (pts[j + 1][1] - pts[j - 1][1]) / 6;
    const [a, b] = [pts[i], pts[i + 1]];
    d += `C${a[0] + 3.84} ${a[1] + t(i)} ${b[0] - 3.84} ${b[1] - t(i + 1)} ${b[0]} ${b[1]}`;
  }
  add(g, 'path', { d: d + 'H2115', fill: 'none', stroke, 'stroke-width': width });
}
function keys(vals, fill, r) {
  vals.forEach((v, i) => add(g, 'circle', { cx: gx(22 + i), cy: py(v), r, fill }));
}
curve(series.red, '#ffd0d0', 1);
curve(series.blue, '#d6d0ff', 1);
line(g, 1048, 820.5, gx(15), 820.5, '#6a5be0', 1.3);
line(g, gx(15), 820.5, gx(22), 820.5, '#e3e2a8', 1.5);
line(g, gx(22), 820.5, 2115, 820.5, '#5b4be0', 1.3);
keys(series.red, '#5a5a5c', 3.8);
keys(series.blue, '#5a5a5c', 3.8);
curve(series.green, '#0be01f', 2.8);
line(g, 1048, 847, gx(1), 847, '#b08c70', 3);
for (let f = 1; f <= 78; f++) {
  if (f > 1 && f < 22) continue;
  add(g, 'circle', { cx: gx(f), cy: 847, r: 4 });
  if (f === 1 || f > 26) add(g, 'circle', { cx: gx(f), cy: 820.5, r: 4 });
  else add(g, 'circle', { cx: gx(f), cy: 820.5, r: 4.5, fill: '#fc7199' }), add(g, 'circle', { cx: gx(f) + 6, cy: 820.5, r: 3.8, fill: '#fc7199', 'fill-opacity': .5, stroke: '#fc7199', 'stroke-width': 2 });
}
add(g, 'circle', { cx: gx(15), cy: 820.5, r: 3.3, fill: '#fff', stroke: '#fc7199', 'stroke-width': 2 });
line(g, gx(1), 847.5, 2115, 847.5, '#c8557b', 2);
keys(series.green, '#000', 4);
add(g, 'rect', { x: 1055, y: 844.5, width: 11, height: 6, rx: 3, fill: '#9aa', stroke: '#3b62a8', 'stroke-width': 1.5 });
add(g, 'rect', { x: 1060, y: 971, width: 1042, height: 14, rx: 7, fill: 'none', stroke: '#f9a0b6', 'stroke-width': 1.5 });
scrollbar(g, 1117, 971, 927, 14);
scrollbar(g, 2099, 748, 15, 211);
handle(g, 2103, 724, -1);

// Dope sheet plot
const d = document.getElementById('dopePlot');
const dx = f => 347.2 + 6.798 * f;
const rows = [[1062, '#ffd5d5'], [1088, '#fff3f3'], [1114, '#ffd5d5'], [1140, '#ffd5d5']];
rows.forEach(([y, fill]) => add(d, 'rect', { x: 286, y, width: 1829, height: 23, fill }));
for (let f = -5; f <= 255; f += 5) {
  line(d, dx(f), 1059, dx(f), 1322, f % 10 ? '#00000038' : '#00000058');
  line(d, dx(f), 1026, dx(f), 1059, '#f5f5f5');
}
for (let f = 0; f <= 250; f += 10) add(d, 'text', { x: dx(f), y: 1048 }, f);
line(d, dx(1), 1059, dx(1), 1322, '#00000050');
add(d, 'rect', { x: 286, y: 1059, width: dx(1) - 286, height: 263, 'fill-opacity': .07 });
add(d, 'rect', { x: dx(250), y: 1059, width: 2115 - dx(250), height: 263, 'fill-opacity': .07 });
rows.forEach(([y]) => {
  for (let f = 1; f <= 78; f++) {
    if (f > 1 && f < 22) continue;
    const picked = f > 1 && f < 27;
    add(d, 'circle', { cx: dx(f), cy: y + 11, r: 5.6, fill: picked ? '#fc7199' : '#f2f2f2', stroke: picked ? '#6cc4da' : '#000', 'stroke-width': 1.7 });
  }
});
line(d, dx(112), 1050, dx(112), 1322, '#fc7199', 2);
add(d, 'rect', { x: 1089, y: 1030, width: 40, height: 25, rx: 5, fill: '#fc7199' });
add(d, 'text', { x: 1109, y: 1047, style: 'fill:#003a9b' }, '112');
scrollbar(d, 297, 1306, 1806, 14);
handle(d, 2103, 1048, -1);
```
